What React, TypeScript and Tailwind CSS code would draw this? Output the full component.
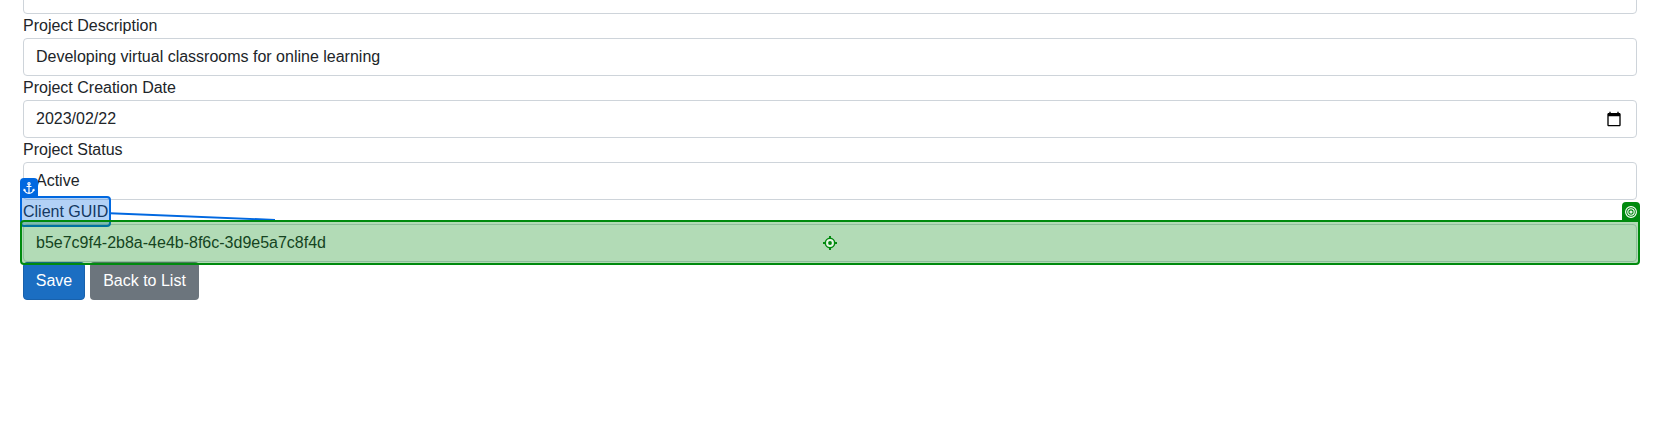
import React from "react";

const label = "h-6 leading-6";
const field = "flex h-[38px] items-center rounded-[4px] border border-[#ced4da] bg-white px-3";

export default function App() {
  return (
    <div className="relative h-[442px] overflow-hidden bg-white pr-[23px] pl-[23px] font-['Liberation_Sans',Arial,sans-serif] text-base text-[#212529]">
      <form className="flex flex-col">
        <div className="-mt-6 h-[38px] rounded-[4px] border border-[#ced4da]" />
        <div className={label}>Project Description</div>
        <div className={field}>Developing virtual classrooms for online learning</div>
        <div className={label}>Project Creation Date</div>
        <div className={field + " justify-between"}>
          <span>2023/02/22</span>
          <svg className="mr-[2px] size-4" viewBox="0 0 24 24" fill="#000">
            <path d="M20 3h-1V1h-2v2H7V1H5v2H4c-1.1 0-2 .9-2 2v16c0 1.1.9 2 2 2h16c1.1 0 2-.9 2-2V5c0-1.1-.9-2-2-2zm0 18H4V8h16v13z" />
          </svg>
        </div>
        <div className={label}>Project Status</div>
        <div className={field}>Active</div>
        <div className={label}>Client GUID</div>
        <div className={field}>b5e7c9f4-2b8a-4e4b-8f6c-3d9e5a7c8f4d</div>
        <div className="flex gap-[5px] text-white">
          <button type="button" className="h-[38px] w-[62px] rounded-[4px] border border-[#1861ac] bg-[#1b6ec2]">Save</button>
          <button type="button" className="h-[38px] w-[109px] rounded-[4px] bg-[#6c757d]">Back to List</button>
        </div>
      </form>

      <svg className="absolute top-[210px] left-[110px] h-[10px] w-[165px]" viewBox="0 0 165 10">
        <path d="M0 3.300L165 9.900" stroke="#0068e0" strokeWidth="2" />
      </svg>
      <div className="absolute top-[196px] left-[20px] h-[31px] w-[91px] rounded-[4px] rounded-tl-none border-2 border-[#0068e0] bg-[#0068e0]/30" />
      <div className="absolute top-[178px] left-[20px] flex h-[19px] w-[18px] items-center justify-center rounded-t-[4px] bg-[#0068e0]">
        <svg className="size-3" viewBox="0 0 12 12" fill="none" stroke="#fff" strokeWidth="1.200">
          <circle cx="6" cy="1.700" r="1.100" />
          <path d="M6 2.800v8.500M3.500 4.500h5M1.200 7.500c.4 2.300 2.100 3.600 4.800 3.800 2.700-.2 4.400-1.500 4.800-3.800M.6 8.800L1.200 7.400l1.500 1M11.400 8.800l-.6-1.400-1.500 1" />
        </svg>
      </div>
      <div className="absolute top-[220px] left-[20px] flex h-[45px] w-[1620px] items-center justify-center rounded-[4px] rounded-tr-none border-2 border-[#008a0e] bg-[#008a0e]/30">
        <svg className="size-[14px]" viewBox="0 0 14 14">
          <circle cx="7" cy="7" r="4.700" fill="#e4f4e4" stroke="#008a0e" strokeWidth="1.500" />
          <circle cx="7" cy="7" r="1.900" fill="#008a0e" />
          <path d="M7 0v2.500M7 11.500V14M0 7h2.500M11.500 7H14" stroke="#008a0e" strokeWidth="2" />
        </svg>
      </div>
      <div className="absolute top-[202px] left-[1622px] flex h-[19px] w-[18px] items-center justify-center rounded-t-[4px] bg-[#008a0e]">
        <svg className="size-3" viewBox="0 0 12 12" fill="none" stroke="#fff" strokeWidth="1.100">
          <circle cx="6" cy="6" r="5.400" />
          <circle cx="6" cy="6" r="3.200" />
          <circle cx="6" cy="6" r="1" />
        </svg>
      </div>
    </div>
  );
}
